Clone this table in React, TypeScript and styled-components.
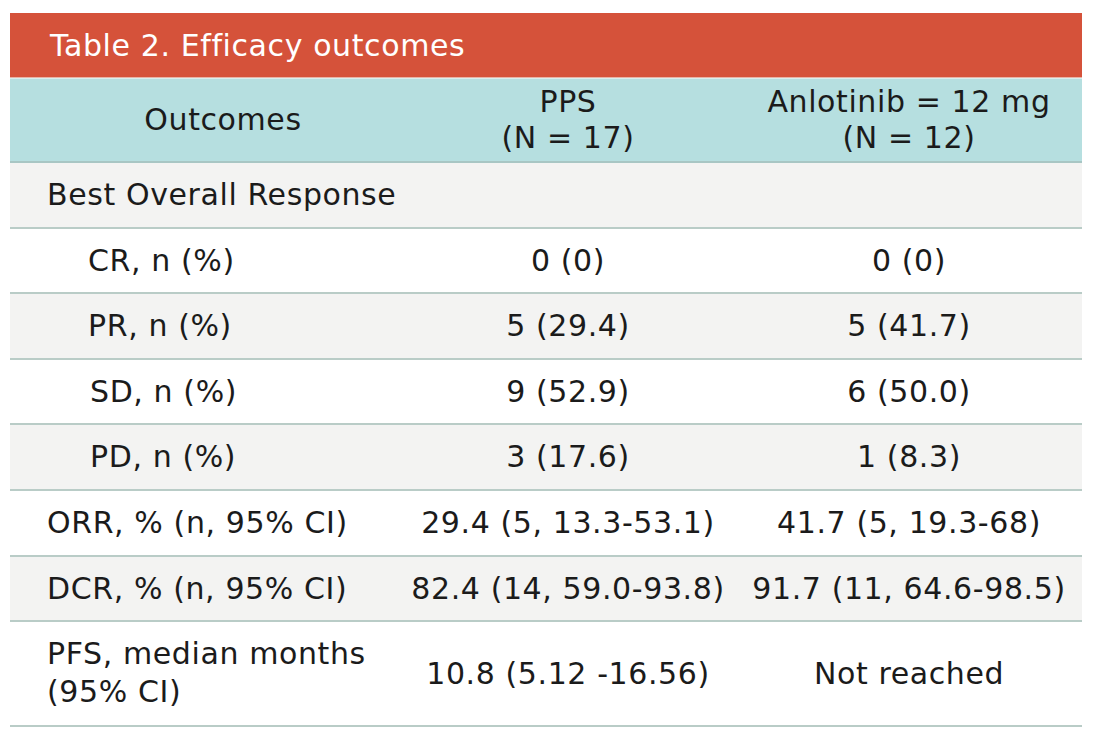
import styled, { createGlobalStyle } from 'styled-components';

const GlobalStyle = createGlobalStyle`
  body {
    margin: 0;
    background: #ffffff;
    font-family: "DejaVu Sans", Verdana, sans-serif;
  }
`;

const Page = styled.div`
  padding: 13px 12px 0 10px;
`;

const Table = styled.div`
  width: 1072px;
  color: #1b1b1b;
  font-size: 30px;
  letter-spacing: 0.6px;
`;

const Title = styled.div`
  height: 65px;
  background: #d5523a;
  color: #ffffff;
  display: flex;
  align-items: center;
  padding-left: 40px;
  box-sizing: border-box;
  border-bottom: 1px solid #e9b3a6;
`;

const Row = styled.div<{ shaded?: boolean; tall?: boolean }>`
  display: grid;
  grid-template-columns: 390px 336px 346px;
  height: ${(p) => (p.tall ? '104.5px' : '65.6px')};
  box-sizing: border-box;
  background: ${(p) => (p.shaded ? '#f3f3f2' : '#ffffff')};
  border-bottom: 2px solid #b9ccc7;
  line-height: 1.25;
`;

const HeaderRow = styled(Row)`
  height: 85px;
  background: #b6dfe0;
  border-top: 1px solid #d9eeee;
  border-bottom: 2px solid #a8c6c4;
`;

const Cell = styled.div<{ align?: 'left' | 'center'; indent?: number }>`
  display: flex;
  flex-direction: column;
  justify-content: center;
  align-items: ${(p) => (p.align === 'left' ? 'flex-start' : 'center')};
  text-align: ${(p) => (p.align === 'left' ? 'left' : 'center')};
  padding-left: ${(p) => (p.align === 'left' ? `${p.indent ?? 37}px` : '0')};
  white-space: nowrap;
`;

const HeadCell = styled(Cell)<{ shift?: number }>`
  line-height: 36px;
  padding-left: ${(p) => (p.shift ? `${p.shift}px` : '0')};
`;

const TwoLineLabel = styled(Cell)`
  line-height: 38px;
`;

type DataRow = { label: string; pps: string; anl: string; indent?: number };

const rows: DataRow[] = [
  { label: 'CR, n (%)', pps: '0 (0)', anl: '0 (0)', indent: 78 },
  { label: 'PR, n (%)', pps: '5 (29.4)', anl: '5 (41.7)', indent: 78 },
  { label: 'SD, n (%)', pps: '9 (52.9)', anl: '6 (50.0)', indent: 80 },
  { label: 'PD, n (%)', pps: '3 (17.6)', anl: '1 (8.3)', indent: 80 },
  { label: 'ORR, % (n, 95% CI)', pps: '29.4 (5, 13.3-53.1)', anl: '41.7 (5, 19.3-68)' },
  { label: 'DCR, % (n, 95% CI)', pps: '82.4 (14, 59.0-93.8)', anl: '91.7 (11, 64.6-98.5)' },
];

export default function App() {
  return (
    <Page>
      <GlobalStyle />
      <Table>
        <Title>Table 2. Efficacy outcomes</Title>
        <HeaderRow>
          <HeadCell shift={36}>Outcomes</HeadCell>
          <HeadCell>
            <span>PPS</span>
            <span>(N = 17)</span>
          </HeadCell>
          <HeadCell>
            <span>Anlotinib = 12 mg</span>
            <span>(N = 12)</span>
          </HeadCell>
        </HeaderRow>
        <Row shaded>
          <Cell align="left">Best Overall Response</Cell>
          <Cell />
          <Cell />
        </Row>
        {rows.map((r, i) => (
          <Row key={r.label} shaded={i % 2 === 1}>
            <Cell align="left" indent={r.indent}>
              {r.label}
            </Cell>
            <Cell>{r.pps}</Cell>
            <Cell>{r.anl}</Cell>
          </Row>
        ))}
        <Row tall>
          <TwoLineLabel align="left">
            <span>PFS, median months</span>
            <span>(95% CI)</span>
          </TwoLineLabel>
          <Cell>10.8 (5.12 -16.56)</Cell>
          <Cell>Not reached</Cell>
        </Row>
      </Table>
    </Page>
  );
}
